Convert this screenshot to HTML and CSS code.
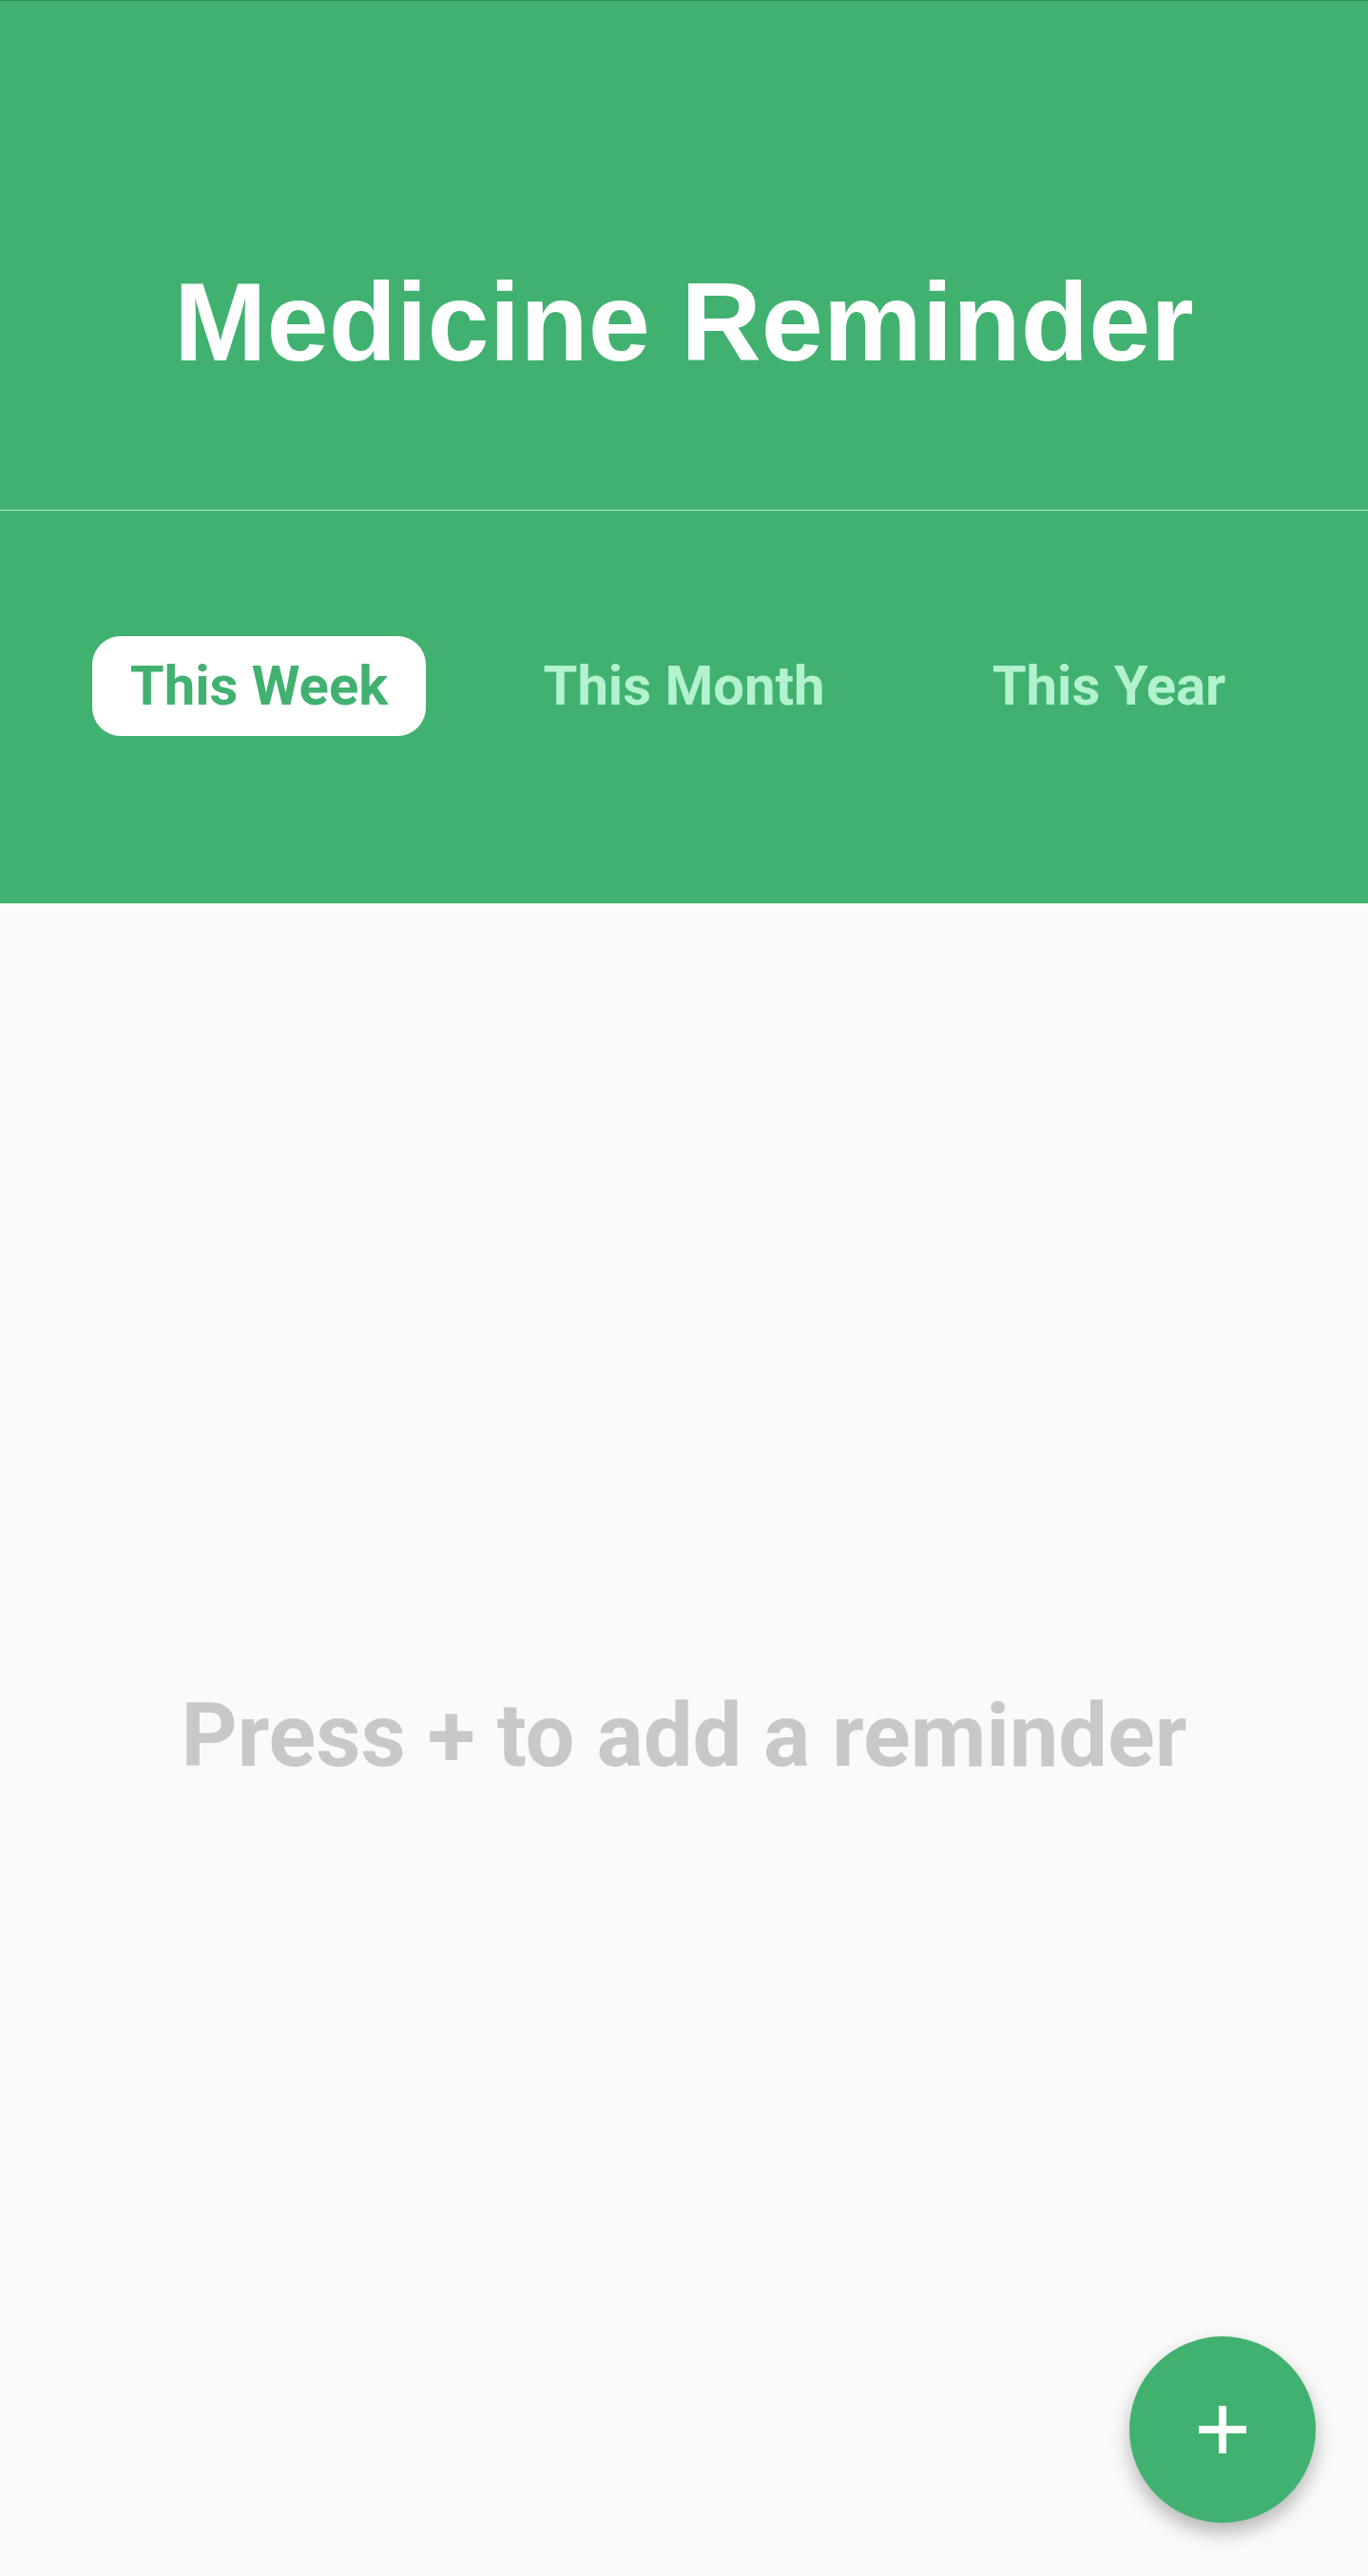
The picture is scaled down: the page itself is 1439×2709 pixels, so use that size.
FILE: index.html
```html
<!DOCTYPE html>
<html lang="en">
<head>
<meta charset="utf-8">
<title>Medicine Reminder</title>
<link rel="stylesheet" href="styles.css">
</head>
<body>
<div class="app">
  <header class="header">
    <h1 class="title">Medicine Reminder</h1>
  </header>
  <nav class="tabs">
    <div class="tab-cell"><span class="tab tab-active">This Week</span></div>
    <div class="tab-cell"><span class="tab">This Month</span></div>
    <div class="tab-cell"><span class="tab">This Year</span></div>
  </nav>
  <main class="content">
    <p class="empty">Press + to add a reminder</p>
  </main>
  <button class="fab" aria-label="Add reminder">
    <svg width="50" height="50" viewBox="0 0 50 50"><path d="M25 0V50M0 25H50" stroke="#fff" stroke-width="8" fill="none"/></svg>
  </button>
</div>
</body>
</html>
```
FILE: styles.css
```css
html, body {
  margin: 0;
  padding: 0;
  background: #fafafa;
}
.app {
  position: relative;
  display: flex;
  flex-direction: column;
  min-height: 100vh;
}
.header {
  box-sizing: border-box;
  height: 537px;
  background: #41b170;
  border-top: 1px solid #2f8c58;
  border-bottom: 1px solid #b3f0ce;
  padding-top: 279px;
}
.title {
  margin: 0;
  text-align: center;
  font-family: "Liberation Sans", Arial, sans-serif;
  font-weight: bold;
  font-size: 117px;
  line-height: 1;
  color: #ffffff;
}
.tabs {
  box-sizing: border-box;
  height: 413px;
  background: #41b170;
  display: grid;
  grid-template-columns: repeat(3, 1fr);
  padding: 132px 49px 0;
  align-items: start;
}
.tab-cell {
  display: flex;
  justify-content: center;
}
.tab {
  display: inline-block;
  padding: 23px 40px 24px;
  border-radius: 30px;
  font-family: Roboto, "Noto Sans", sans-serif;
  font-weight: bold;
  font-size: 58px;
  line-height: 58px;
  color: #b3f2cf;
}
.tab-active {
  background: #ffffff;
  color: #41b170;
}
.content {
  flex: 1;
  display: flex;
  align-items: center;
  justify-content: center;
  padding-bottom: 8px;
}
.empty {
  margin: 0;
  font-family: Roboto, "Noto Sans", sans-serif;
  font-weight: bold;
  font-size: 92px;
  line-height: 1;
  color: #c8c8c8;
}
.fab {
  position: absolute;
  right: 55px;
  bottom: 56px;
  width: 196px;
  height: 196px;
  border: none;
  border-radius: 50%;
  background: #41b170;
  box-shadow: 0 10px 20px rgba(0, 0, 0, 0.28);
  display: flex;
  align-items: center;
  justify-content: center;
  padding: 0;
}
```
